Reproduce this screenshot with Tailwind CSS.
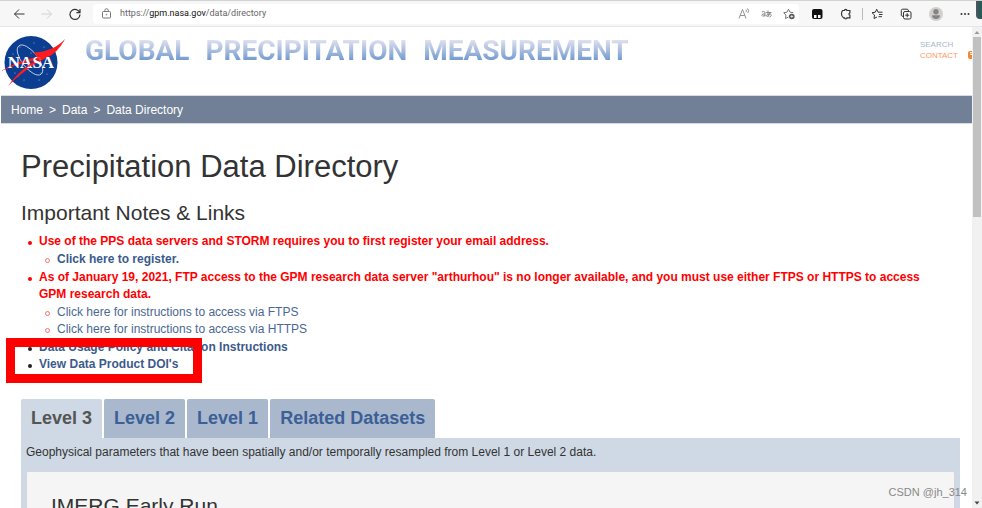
<!DOCTYPE html>
<html lang="en">
<head>
<meta charset="utf-8">
<meta name="viewport" content="width=device-width, initial-scale=1">
<title>Precipitation Data Directory</title>
<script src="https://cdn.jsdelivr.net/npm/@tailwindcss/browser@4"></script>
</head>
<body class="relative flex h-screen flex-col overflow-hidden bg-white font-['Liberation_Sans',Arial,sans-serif] text-[#333]">

<!-- Browser toolbar -->
<div class="flex h-[27px] shrink-0 items-center border-t border-b border-t-[#d0d3d2] border-b-[#e6e6e6] bg-[#f7f7f7] pl-[13px] text-[#222]">
  <button type="button" aria-label="Back" class="mr-4"><svg class="size-3" viewBox="0 0 12 12" fill="none" stroke="#333" stroke-width="1"><path d="M11.500 6H1.500M6 1.500 1.500 6 6 10.500"/></svg></button>
  <button type="button" aria-label="Forward" class="mr-4"><svg class="size-3" viewBox="0 0 12 12" fill="none" stroke="#d0d0d0" stroke-width="1"><path d="M.5 6h10M6 1.500 10.500 6 6 10.500"/></svg></button>
  <button type="button" aria-label="Refresh"><svg class="size-3" viewBox="0 0 12 12" fill="none" stroke="#333" stroke-width="1.200"><path d="M10.800 5A5 5 0 1 0 11 6.500M11 1v3.700H7.400"/></svg></button>
  <div class="ml-3 flex h-5 min-w-0 flex-1 items-center rounded-sm bg-white pr-1 pl-2">
    <svg class="size-[11px] shrink-0" viewBox="0 0 11 11" fill="none" stroke="#777" stroke-width="1"><rect x="1.500" y="3.500" width="8" height="6.500" rx="1"/><path d="M3.800 3.500V2.500a1.700 1.700 0 0 1 3.500 0V3.500"/><circle cx="5.500" cy="6.700" r=".4"/></svg>
    <a href="#" class="ml-2 flex-1 font-['Roboto',sans-serif] text-[9px] text-[#666]">https://<span class="text-[#111]">gpm.nasa.gov</span>/data/directory</a>
    <div class="flex items-center gap-[11px]">
      <button type="button" aria-label="Read aloud"><svg class="size-3" viewBox="0 0 12 12" fill="none" stroke="#888" stroke-width=".9"><path d="M1 10.500 4.500 1.500 8 10.500M2.200 7.500h4.600M8 1.500q1 1 0 2.500M9.500.5q2 2 .3 4.500"/></svg></button>
      <button type="button" aria-label="Translate"><svg class="h-3 w-[11px]" viewBox="0 0 11 12" fill="none" stroke="#888" stroke-width="1"><path d="M.8 4q2-1.200 3.200.3V8.500M4 6Q1 5.500.8 7.300 1 9 4 7.500M5 4.500h5.500M7 2.500q-.3 4 .5 6M9.300 4.500Q8 8.500 6 8.500 4.700 7.500 6.500 6.300q4-1 3.700 1.200-.2 1.200-1.700 1.500"/></svg></button>
      <button type="button" aria-label="Add to favorites"><svg class="size-3" viewBox="0 0 12 12" fill="none" stroke="#777" stroke-width="1"><path d="M5.500 9 2.500 10.500 3 7 .7 4.700 4 4.200 5.500 1.200 7 4.200l3.300.5"/><circle cx="8.800" cy="8.500" r="2.800" fill="#555" stroke="none"/><path d="M7.300 8.500h3M8.800 7v3" stroke="#fff" stroke-width=".7"/></svg></button>
    </div>
  </div>
  <div class="flex items-center gap-[17px] pr-3 pl-3">
    <button type="button" aria-label="Extension"><svg class="size-3" viewBox="0 0 12 12"><rect x="1" y="1" width="10.500" height="10" rx="2" fill="#111"/><rect x="3" y="7" width="2.500" height="3" fill="#fff"/><rect x="7" y="7" width="2.500" height="3" fill="#fff"/></svg></button>
    <button type="button" aria-label="Extensions" class="relative"><svg class="size-3" viewBox="0 0 12 12" fill="none" stroke="#333" stroke-width="1.200"><path d="M2.500 2.500h2a1.200 1.200 0 0 1 2.400 0h3v2.300a1.300 1.300 0 0 0 0 2.500v2.500H7a1.200 1.200 0 0 1-2.400 0H3.500Q1.500 8.500 1.500 6q0-2 1-3.500Z"/></svg><span class="absolute top-0 left-[22px] h-3 border-l border-[#bbb]"></span></button>
    <button type="button" aria-label="Favorites" class="ml-[2px]"><svg class="size-3" viewBox="0 0 12 12" fill="none" stroke="#333" stroke-width="1"><path d="M6 9 3 10.500 3.500 7 1 4.700l3.300-.5L5.700 1.200 7 4.200h4.500M8 6.500h3.500M7.500 8.700h3.500"/></svg></button>
    <button type="button" aria-label="Collections"><svg class="size-3" viewBox="0 0 12 12" fill="none" stroke="#333" stroke-width="1"><path d="M3 8.500 1.300 7.500V2.500q0-1.300 1.300-1.300H7.500L8.700 3"/><rect x="3.500" y="3.500" width="7.500" height="7.500" rx="1.500"/><path d="M7.200 5.200v4M5.200 7.200h4"/></svg></button>
    <button type="button" aria-label="Profile"><svg class="size-[14px]" viewBox="0 0 14 14"><circle cx="7" cy="7" r="7" fill="#d2d0ce"/><circle cx="7" cy="4.800" r="2.700" fill="#858585"/><path d="M3 8.200h8q0 3.800-4 3.800T3 8.200Z" fill="#858585"/></svg></button>
    <button type="button" aria-label="Settings and more"><svg class="h-3 w-[10px]" viewBox="0 0 10 12" fill="#333"><circle cx="1.500" cy="6" r="1"/><circle cx="5" cy="6" r="1"/><circle cx="8.500" cy="6" r="1"/></svg></button>
  </div>
</div>
<div class="absolute top-px right-0 h-[18px] w-[6px] rounded-bl-sm border-l-2 border-[#4a5560] bg-[#2c5a58]"></div>

<div class="flex min-h-0 flex-1">
  <div class="relative min-w-0 flex-1 overflow-hidden pl-px">
    <!-- Site header -->
    <header class="flex h-[68px] items-start justify-between">
      <a href="#" class="flex items-start">
        <svg class="mt-2 h-14 w-[66px] shrink-0" viewBox="1 35 66 56" role="img" aria-label="NASA">
          <circle cx="31" cy="62.500" r="26.500" fill="#0b3d91"/>
          <g fill="#b8c8e8"><circle cx="20" cy="47" r=".5"/><circle cx="34" cy="43" r=".5"/><circle cx="13" cy="54" r=".5"/><circle cx="47" cy="74" r=".5"/><circle cx="39" cy="80" r=".6"/><circle cx="18" cy="76" r=".6"/><circle cx="24" cy="80" r=".5"/><circle cx="44" cy="47" r=".5"/><circle cx="41" cy="73" r=".5"/><circle cx="15" cy="73" r=".5"/><circle cx="31" cy="53" r=".5"/></g>
          <ellipse cx="30" cy="60" rx="8" ry="18" transform="rotate(-38 30 60)" fill="none" stroke="#d8e0f0" stroke-width=".8"/>
          <path d="M65 39Q55 51 33 53L41 56Q19 60 1 71 19 63 42 59 24 64 8 86 26 68 46 58 57 54 65 39Z" fill="#fc1b20"/>
          <text x="31" y="68" text-anchor="middle" font-family="Liberation Serif, serif" font-weight="700" font-size="17" fill="#fff">NASA</text>
          <path d="M65 39Q61 46 54 50L44 59 39 60 34 53Q55 51 65 39ZM26 67 34 60.500 30 66.500Z" fill="#fc1b20" opacity=".85"/>
        </svg>
        <span class="mt-[2px] ml-[18px] flex gap-4 bg-linear-to-b from-[#dfe1ee] from-25% to-[#5f8cc8] to-80% bg-clip-text font-['Roboto',sans-serif] text-[28px] leading-[44px] font-bold text-transparent"><span>GLOBAL</span><span>PRECIPITATION</span><span>MEASUREMENT</span></span>
      </a>
      <nav class="mt-3 flex gap-[10px] text-[8px] leading-[11px]">
        <div><a href="#" class="block text-[#a9b7cc]">SEARCH</a><a href="#" class="block text-[#ff9664]">CONTACT</a></div>
        <div class="mt-3 h-2 w-1 overflow-hidden"><svg class="size-2" viewBox="0 0 8 8"><rect width="8" height="8" rx="2" fill="#f58634"/><path d="M2 3q3 0 3 3M2 1.500q4.500 0 4.500 4.500" stroke="#fff" fill="none"/></svg></div>
      </nav>
    </header>

    <nav aria-label="Breadcrumb" class="flex h-[29px] items-center gap-[6px] border-t border-b border-[#d5dbe4] bg-[#718096] pl-[10px] text-[12px] text-white">
      <a href="#">Home</a><span>&gt;</span><a href="#">Data</a><span>&gt;</span><span>Data Directory</span>
    </nav>

    <main class="pr-3 pl-5">
      <h1 class="pt-[25px] text-[31px] leading-9">Precipitation Data Directory</h1>
      <h2 class="pt-4 text-[21px] leading-6">Important Notes &amp; Links</h2>

      <ul class="relative mt-2 pr-5 text-[12px] leading-[17px] font-bold text-[#3b5a8c]">
        <li class="relative pl-[18px] text-[#f00]"><span class="absolute top-[8px] left-[7px] size-1 rounded-full bg-[#f00]"></span>Use of the PPS data servers and STORM requires you to first register your email address.
          <ul class="py-px">
            <li class="relative pl-[18px]"><span class="absolute top-[7px] left-[6px] size-[5px] rounded-full border border-[#ff7070]"></span><a href="#" class="text-[#3b5a8c]">Click here to register.</a></li>
          </ul>
        </li>
        <li class="relative pl-[18px] text-[#f00]"><span class="absolute top-[8px] left-[7px] size-1 rounded-full bg-[#f00]"></span>As of January 19, 2021, FTP access to the GPM research data server "arthurhou" is no longer available, and you must use either FTPS or HTTPS to access GPM research data.
          <ul class="py-px font-normal">
            <li class="relative pl-[18px]"><span class="absolute top-[7px] left-[6px] size-[5px] rounded-full border border-[#ff7070]"></span><a href="#" class="text-[#4a6894]">Click here for instructions to access via FTPS</a></li>
            <li class="relative pl-[18px]"><span class="absolute top-[7px] left-[6px] size-[5px] rounded-full border border-[#ff7070]"></span><a href="#" class="text-[#4a6894]">Click here for instructions to access via HTTPS</a></li>
          </ul>
        </li>
        <li class="relative pl-[18px]"><span class="absolute top-[8px] left-[7px] size-1 rounded-full bg-[#222]"></span><a href="#">Data Usage Policy and Citation Instructions</a></li>
        <li class="relative pl-[18px]"><span class="absolute top-[8px] left-[7px] size-1 rounded-full bg-[#222]"></span><a href="#">View Data Product DOI's</a>
          <span class="absolute -top-[18px] -left-[15px] h-[45px] w-[196px] border-9 border-[#f00]"></span>
        </li>
      </ul>

      <div class="mt-[26px]">
        <div class="flex gap-[2px] text-[18px] leading-[39px] font-bold text-[#3b5f96]" role="tablist">
          <button type="button" role="tab" aria-selected="true" class="rounded-t-xs bg-[#cfd9e5] px-[10px] text-[#555]">Level 3</button>
          <button type="button" role="tab" aria-selected="false" class="rounded-t-xs bg-[#a9b8cd] px-[10px]">Level 2</button>
          <button type="button" role="tab" aria-selected="false" class="rounded-t-xs bg-[#a9b8cd] px-[10px]">Level 1</button>
          <button type="button" role="tab" aria-selected="false" class="rounded-t-xs bg-[#a9b8cd] px-[10px]">Related Datasets</button>
        </div>
        <div class="bg-[#cfd9e5] px-[5px] pt-[6px] pb-5" role="tabpanel">
          <p class="text-[12px] leading-[17px]">Geophysical parameters that have been spatially and/or temporally resampled from Level 1 or Level 2 data.</p>
          <section class="mt-[10px] rounded-xs border border-[#d3d6da] bg-[#f5f5f5] px-6 pt-[22px] pb-10">
            <h3 class="text-[21px] leading-6">IMERG Early Run</h3>
          </section>
        </div>
      </div>
    </main>
  </div>

  <!-- Scrollbar -->
  <div class="flex w-[10px] shrink-0 flex-col items-center bg-[#f1f1f1]">
    <svg class="h-[10px] w-2 shrink-0" viewBox="0 0 8 10"><path d="M1.500 7 4 4 6.500 7Z" fill="#999"/></svg>
    <div class="h-[180px] w-2 shrink-0 bg-[#c1c1c1]"></div>
    <svg class="mt-auto h-[10px] w-2 shrink-0" viewBox="0 0 8 10"><path d="M1.500 3.500 4 6.500 6.500 3.500Z" fill="#444"/></svg>
  </div>
</div>

<div class="absolute right-[15px] bottom-[9px] text-[11px] leading-[14px] text-[#888]">CSDN @jh_314</div>
</body>
</html>
